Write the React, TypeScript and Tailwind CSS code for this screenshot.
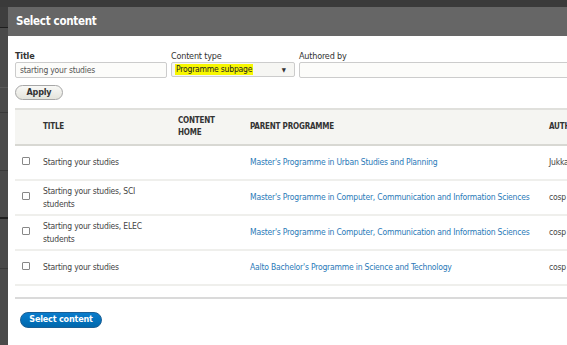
import React from "react";

interface Row {
	title: string;
	parent: string;
	author: string;
}

const rows: Row[] = [
	{ title: "Starting your studies", parent: "Master's Programme in Urban Studies and Planning", author: "Jukka Mäkinen" },
	{ title: "Starting your studies, SCI students", parent: "Master's Programme in Computer, Communication and Information Sciences", author: "cosp wretman" },
	{ title: "Starting your studies, ELEC students", parent: "Master's Programme in Computer, Communication and Information Sciences", author: "cosp wretman" },
	{ title: "Starting your studies", parent: "Aalto Bachelor's Programme in Science and Technology", author: "cosp" },
];

const font = "font-['DejaVu_Sans_Condensed','DejaVu_Sans',sans-serif]";

function App() {
	return (
		<div className={`w-[567px] h-[345px] overflow-hidden bg-[#3d3d3d] flex flex-col ${font}`}>
			<div className="h-[7px] shrink-0 bg-[#3a3a3a]" />
			<div className="flex flex-1 min-h-0">
				{/* page behind the overlay */}
				<div className="w-[8px] shrink-0 bg-[#4a4a4a] flex flex-col">
					<div className="h-[21px] bg-[#3e3e3e] border-b border-[#1e1e1e]" />
					<div className="h-[60px] border-b border-[#5a5a5a]" />
					<div className="h-[25px] border-b border-[#3a3a3a]" />
					<div className="h-[58px] border-b border-[#3a3a3a]" />
					<div className="h-[48px] border-b-2 border-[#1e1e1e]" />
					<div className="h-[50px] border-b border-[#3a3a3a]" />
				</div>

				{/* modal */}
				<div className="w-[640px] shrink-0 flex flex-col bg-white">
					<div className="h-[29px] shrink-0 bg-[#666666] flex items-center pl-[8px]">
						<h1 className="text-white font-bold text-[11.5px] tracking-[-0.3px]">Select content</h1>
					</div>

					<div className="px-[7px] pt-[14px] text-[#333]">
						<form className="flex gap-[4px]">
							<label className="flex flex-col w-[152px]">
								<span className="text-[9px] font-bold leading-[12px] tracking-[-0.2px]">Title</span>
								<input
									readOnly
									value="starting your studies"
									className="h-[16px] px-[4px] border border-[#ccc] rounded-[2px] bg-[#fcfcfa] text-[8.5px] text-[#555] tracking-[-0.2px] outline-none"
								/>
							</label>
							<label className="flex flex-col w-[124px]">
								<span className="text-[9px] leading-[12px] tracking-[-0.2px]">Content type</span>
								<div className="h-[15px] pl-[3px] pr-[8px] border border-[#ccc] rounded-[2px] bg-[#f6f6f3] flex items-center justify-between">
									<span className="bg-[#f7f700] text-[8.5px] text-[#222] leading-[11px] tracking-[-0.2px] px-[1px]">Programme subpage</span>
									<span className="text-[6px] text-[#333]">▼</span>
								</div>
							</label>
							<label className="flex flex-col w-[320px]">
								<span className="text-[9px] leading-[12px] tracking-[-0.2px]">Authored by</span>
								<input
									readOnly
									value=""
									className="h-[16px] px-[4px] border border-[#ccc] rounded-[2px] bg-[#fcfcfa] outline-none"
								/>
							</label>
						</form>

						<button className="mt-[7px] w-[48px] h-[15px] rounded-full border border-[#a6a6a6] bg-gradient-to-b from-[#f8f8f6] to-[#e4e4dc] text-[9px] font-bold text-[#333] tracking-[-0.2px] flex items-center justify-center">
							Apply
						</button>

						<table className="mt-[8px] w-[620px] border-collapse text-[8.5px] tracking-[-0.2px]">
							<thead>
								<tr className="h-[36px] bg-[#f5f5f2] border-t-2 border-[#e0e0dc] border-b-2 border-b-[#d8d8d3] text-[8px] text-[#333] font-semibold uppercase leading-[12px] text-left">
									<th className="w-[28px]" />
									<th className="w-[135px] font-semibold">Title</th>
									<th className="w-[72px] font-semibold">Content<br />home</th>
									<th className="w-[299px] font-semibold">Parent programme</th>
									<th className="font-semibold">Authored by</th>
								</tr>
							</thead>
							<tbody>
								{rows.map((row, i) => (
									<tr key={i} className="h-[35px] border-b-2 border-[#efefec] leading-[13px]">
										<td className="pl-[7px] align-middle">
											<div className="w-[8px] h-[8px] border border-[#888] rounded-[1px] bg-white mb-[3px]" />
										</td>
										<td className="pr-[30px] text-[#444]">{row.title}</td>
										<td />
										<td className="text-[#2a7ab8]">{row.parent}</td>
										<td className="pr-[30px] text-[#444]">{row.author}</td>
									</tr>
								))}
							</tbody>
						</table>

						<div className="mt-[11px] border-t-2 border-[#dadada]" />

						<button className="mt-[13px] ml-[5px] w-[82px] h-[16px] rounded-full bg-gradient-to-b from-[#0a7ccc] to-[#0068ad] border border-[#1a5f95] text-white text-[9px] font-bold tracking-[-0.2px] flex items-center justify-center">
							Select content
						</button>
					</div>
				</div>
			</div>
		</div>
	);
}

export default App;
